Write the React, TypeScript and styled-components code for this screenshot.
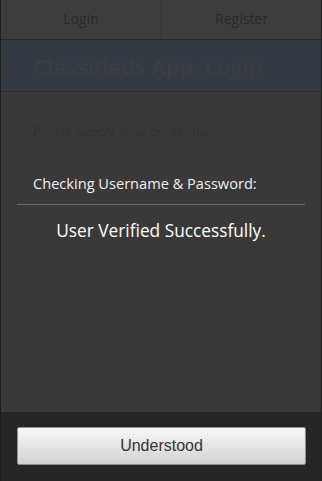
import React from "react";
import styled, { createGlobalStyle } from "styled-components";

const Global = createGlobalStyle`
  html, body { margin: 0; padding: 0; height: 100%; background: #393939; }
  #root { height: 100%; }
  * { box-sizing: border-box; }
`;

const Screen = styled.div`
  height: 100vh;
  display: flex;
  flex-direction: column;
  background: #393939;
  border-left: 1px solid #1e1e1e;
  border-right: 1px solid #1e1e1e;
  font-family: "Open Sans", "Noto Sans", sans-serif;
`;

const NavBar = styled.nav`
  display: grid;
  grid-template-columns: 1fr 1fr;
  height: 40px;
  background: #3d3d3d;
  border-bottom: 1px solid #2c2c2c;
`;

const NavTab = styled.div<{ $divider?: boolean }>`
  display: flex;
  align-items: center;
  justify-content: center;
  font-size: 14px;
  color: #2a2a2a;
  border-left: ${(p) => (p.$divider ? "1px solid #333" : "none")};
  padding-bottom: 2px;
`;

const Header = styled.header`
  height: 52px;
  background: #343a41;
  border-bottom: 1px solid #2b2e33;
  display: flex;
  align-items: center;
  padding: 0 0 0 32px;
`;

const Title = styled.h1`
  margin: 0;
  font-size: 22px;
  font-weight: 700;
  color: #3a3d42;
  letter-spacing: -0.3px;
`;

const Body = styled.main`
  flex: 1;
  display: flex;
  flex-direction: column;
  padding: 30px 16px 0;
`;

const Muted = styled.p`
  margin: 0 0 0 16px;
  font-size: 13px;
  color: #333;
`;

const DialogText = styled.p`
  margin: 33px 0 0 16px;
  font-size: 14.6px;
  color: #f0f0f0;
  line-height: 20px;
`;

const Rule = styled.hr`
  margin: 11px 0 0;
  border: 0;
  border-top: 1px solid #6a6a6a;
`;

const Status = styled.p`
  margin: 14px 0 0;
  text-align: center;
  font-size: 17.3px;
  color: #ffffff;
  line-height: 24px;
`;

const Footer = styled.footer`
  height: 70px;
  background: #262626;
  border-top: 1px solid #3c3c3c;
  padding: 15px 15px 0 16px;
`;

const Button = styled.button`
  width: 100%;
  height: 38px;
  border: 1px solid #8f8f8f;
  border-radius: 2px;
  background: linear-gradient(#f7f7f7, #d3d3d3);
  font-family: "Liberation Sans", Arial, sans-serif;
  font-size: 16px;
  color: #333;
  cursor: pointer;
`;

export default function App() {
  return (
    <>
      <Global />
      <Screen>
        <NavBar>
          <NavTab>Login</NavTab>
          <NavTab $divider>Register</NavTab>
        </NavBar>
        <Header>
          <Title>Classifieds App: Login</Title>
        </Header>
        <Body>
          <Muted>Please supply your credentials:</Muted>
          <DialogText>Checking Username &amp; Password:</DialogText>
          <Rule />
          <Status>User Verified Successfully.</Status>
        </Body>
        <Footer>
          <Button>Understood</Button>
        </Footer>
      </Screen>
    </>
  );
}
